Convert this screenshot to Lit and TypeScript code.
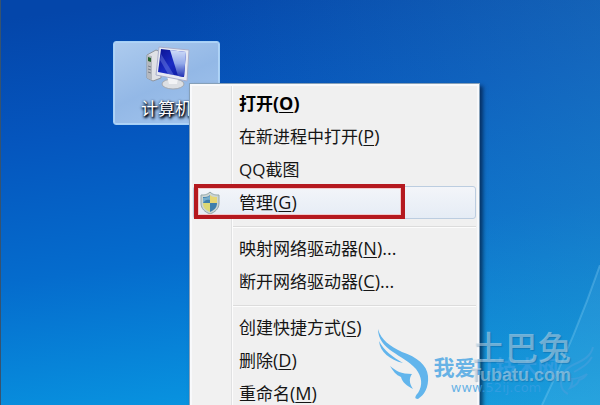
import { LitElement, html, css, nothing } from "lit";
import { customElement } from "lit/decorators.js";

interface Entry {
  label: string;
  key?: string;
  tail?: string;
  strong?: boolean;
  hover?: boolean;
  shield?: boolean;
}

const GROUPS: Entry[][] = [
  [
    { label: "打开", key: "O", strong: true },
    { label: "在新进程中打开", key: "P" },
    { label: "QQ截图" },
    { label: "管理", key: "G", hover: true, shield: true },
  ],
  [
    { label: "映射网络驱动器", key: "N", tail: "..." },
    { label: "断开网络驱动器", key: "C", tail: "..." },
  ],
  [
    { label: "创建快捷方式", key: "S" },
    { label: "删除", key: "D" },
    { label: "重命名", key: "M" },
  ],
];

@customElement("context-menu")
export class ContextMenu extends LitElement {
  static styles = css`
    :host {
      display: block;
      box-sizing: border-box;
      padding: 3px;
      border: 1px solid #86a0b8;
      background: linear-gradient(90deg, #f1f1f1 41px, #e0e1e2 41px, #e0e1e2 42px, #fcfcfc 42px, #fcfcfc 43px, #f0f0f0 43px);
      box-shadow: inset 0 0 0 2px #f8f9fb, 3px 3px 4px rgba(0, 20, 50, 0.65);
    }
    .item {
      display: grid;
      grid-template-columns: 32px 1fr;
      column-gap: 13px;
      align-items: center;
      box-sizing: border-box;
      width: 100%;
      height: 33px;
      padding: 0;
      border: 1px solid transparent;
      border-radius: 3px;
      background: none;
      color: #151515;
      font: 17px/24px "Open Sans", "Noto Sans CJK SC", sans-serif;
      text-align: left;
      white-space: nowrap;
    }
    .latin { font-size: 18px; }
    .strong { font-weight: 700; color: #000; }
    .hover {
      border-color: #bccde0;
      background: linear-gradient(#f3f5f9, #e5ecf5);
    }
    .icon { display: flex; justify-content: center; }
    .key { text-decoration: underline; text-underline-offset: 2px; text-decoration-thickness: 1px; }
    .rule {
      margin: 7px 0 4px 40px;
      border: 0;
      border-top: 1px solid #dcdcdc;
      border-bottom: 1px solid #fcfcfc;
    }
  `;

  private shield() {
    return html`<svg width="20" height="24" viewBox="0 0 20 24" aria-hidden="true">
      <path d="M10 1C7 4 4 4 1 4V12C1 18 5 21 10 23C15 21 19 18 19 12V4C16 4 13 4 10 1Z" fill="#ccd5d2" stroke="#93a6a8"/>
      <path d="M10 4C8 6 6 6 3 6V12H10Z" fill="#3f7fac"/>
      <path d="M10 4C12 6 14 6 17 6V12H10Z" fill="#e6d673"/>
      <path d="M3 12H10V21C6 19 3 17 3 12Z" fill="#dcd874"/>
      <path d="M17 12H10V21C14 19 17 17 17 12Z" fill="#3f7fac"/>
      <path d="M3 7C6 7 8 6 10 5V9C7 8 5 9 3 12Z" fill="#9acbe0" opacity=".6"/>
    </svg>`;
  }

  render() {
    return GROUPS.map(
      (group, i) => html`${i ? html`<hr class="rule" />` : nothing}
      ${group.map(
        (e) => html`<button class="item ${e.strong ? "strong" : ""} ${e.hover ? "hover" : ""}" role="menuitem">
          <span class="icon">${e.shield ? this.shield() : nothing}</span>
          <span>${e.label}${e.key ? html`<span class="latin">(<span class="key">${e.key}</span>)${e.tail ?? nothing}</span>` : nothing}</span>
        </button>`
      )}`
    );
  }
}

@customElement("desktop-icon")
export class DesktopIcon extends LitElement {
  static styles = css`
    .tile {
      display: flex;
      flex-direction: column;
      align-items: center;
      box-sizing: border-box;
      width: 107px;
      height: 84px;
      padding: 4px 0 0;
      gap: 6px;
      border: 1px solid #a6d0f6;
      border-radius: 3px;
      background: linear-gradient(155deg, #adcbee, #93b8e6 50%, #a4c6ee);
      box-shadow: inset 0 0 0 1px #b0d3f6;
      color: #fff;
      font: 17px/24px "Noto Sans CJK SC", sans-serif;
      text-shadow: 1px 1px 2px #001, 0 1px 3px #012, 1px 2px 3px #012;
    }
  `;

  render() {
    return html`<button class="tile">
      <svg width="46" height="44" viewBox="0 0 46 44" aria-hidden="true">
        <defs>
          <linearGradient id="screen" x1="0" y1="0" x2="1" y2="1">
            <stop offset="0" stop-color="#0a1290"/><stop offset=".5" stop-color="#1a2cc4"/><stop offset="1" stop-color="#0a1496"/>
          </linearGradient>
          <linearGradient id="glare" x1="0" y1="0" x2="0" y2="1">
            <stop offset="0" stop-color="#cfdcf8"/><stop offset=".5" stop-color="#93aaea"/><stop offset="1" stop-color="#2030b4"/>
          </linearGradient>
        </defs>
        <path d="M3 9L12 4L17 6V32L9 35L3 32Z" fill="#dfe1e6" stroke="#8f949d"/>
        <path d="M3 9L8 10V34L3 32Z" fill="#b4b8bf"/>
        <path d="M4 11L7 12V16L4 15Z" fill="#28632e"/>
        <path d="M4 20L7 21M4 23L7 24M4 26L7 27" stroke="#7b818a"/>
        <ellipse cx="29" cy="38" rx="11" ry="5" fill="#dcdfe3" stroke="#a4a9b1"/>
        <path d="M23 30L34 32L33 38H25Z" fill="#f2f3f5"/>
        <path d="M15 1L45 4L43 35L12 29Z" fill="#e6e9f2" stroke="#a9aeca"/>
        <path d="M17 3L42 6L40 31L14 26Z" fill="url(#screen)"/>
        <path d="M26 4L42 6L40 31L34 30Z" fill="url(#glare)"/>
        <path d="M17 8L30 29L24 28L16 14Z" fill="#8fa4f0" opacity=".35"/>
      </svg>
      <span>计算机</span>
    </button>`;
  }
}

@customElement("site-marks")
export class SiteMarks extends LitElement {
  static styles = css`
    :host { display: grid; justify-items: end; font-family: "Noto Sans CJK SC", sans-serif; pointer-events: none; }
    .faint, .blue { grid-area: 1 / 1; }
    .faint { padding-right: 25px; color: rgba(206, 222, 232, 0.5); text-align: right; text-shadow: 1px 1px 1px rgba(0, 60, 110, 0.25); }
    .name { font-size: 33px; line-height: 34px; font-weight: 500; }
    .host { font: 700 18px/24px "Liberation Sans", sans-serif; }
    .blue { display: grid; grid-template-columns: 56px 128px 36px; color: rgba(58, 158, 226, 0.75); }
    .words { padding-top: 24px; text-align: center; }
    .title { font-size: 21px; line-height: 26px; font-weight: 700; white-space: nowrap; }
    .site { font: 13px/18px "DejaVu Sans", sans-serif; }
  `;

  render() {
    return html`<div class="blue">
        <svg width="56" height="76" viewBox="0 0 56 76" aria-hidden="true">
          <g fill="#62b5ec">
            <path d="M2 0C5 11 14 17 26 23C41 28 51 36 52 47C53 59 48 66 42 70C38 70 39 67 42 64C47 56 46 48 40 40C33 32 24 28 17 23C8 17 2 10 2 0Z"/>
            <path d="M3 12C8 22 17 28 27 34C14 31 4 23 3 12Z"/>
            <path d="M14 37C20 42 25 45 36 45C33 49 33 54 37 60C31 57 26 53 25 48C20 46 17 42 14 37Z"/>
          </g>
        </svg>
        <div class="words">
          <div class="title">我爱IT技术网</div>
          <div class="site">www.52ij.com</div>
        </div>
        <svg width="36" height="76" viewBox="0 0 36 76" aria-hidden="true">
          <g fill="none" stroke="#409fdd" stroke-width="2" opacity=".75">
            <path d="M33 18C31 27 24 31 15 35C6 39 1 46 1 54C1 60 4 63 8 65"/>
            <path d="M32 28C28 35 23 38 14 43"/>
            <path d="M27 45C22 48 18 50 12 50C13 54 12 56 10 59C15 57 18 55 19 51C23 50 25 48 27 45Z"/>
          </g>
        </svg>
      </div>
      <div class="faint">
        <div class="name">土巴兔</div>
        <div class="host">Tubatu.com</div>
      </div>`;
  }
}

@customElement("app-root")
export class AppRoot extends LitElement {
  static styles = css`
    :host {
      display: block;
      position: relative;
      height: 100vh;
      overflow: hidden;
      border-left: 1px solid #37536f;
      box-sizing: border-box;
      background:
        linear-gradient(90deg, rgba(60, 130, 170, 0) 30%, rgba(60, 150, 190, 0.28)),
        linear-gradient(172deg, #0446aa 4%, #0556be 30%, #056ccd 58%, #0890de 86%, #10a0e6 100%);
    }
    .ray { position: absolute; right: 0; bottom: 0; }
    .computer { position: absolute; left: 112px; top: 41px; }
    .menu { position: absolute; left: 188px; top: 83px; width: 291px; }
    .callout { position: absolute; left: 193px; top: 184px; width: 211px; height: 35px; box-sizing: border-box; border: 4px solid #b5191f; box-shadow: inset 0 0 0 1px #f3c9cb; pointer-events: none; }
    .marks { position: absolute; right: 4px; bottom: 0; }
  `;

  render() {
    return html`<svg class="ray" width="60" height="140" viewBox="0 0 60 140" aria-hidden="true">
        <path d="M60 0Q36 70 2 140H60Z" fill="#7fd0f4" opacity=".12"/>
        <path d="M60 0Q36 70 2 140" fill="none" stroke="#8fd4f4" stroke-width="2" opacity=".3"/>
      </svg>
      <desktop-icon class="computer"></desktop-icon>
      <context-menu class="menu" role="menu"></context-menu>
      <div class="callout"></div>
      <site-marks class="marks"></site-marks>`;
  }
}
